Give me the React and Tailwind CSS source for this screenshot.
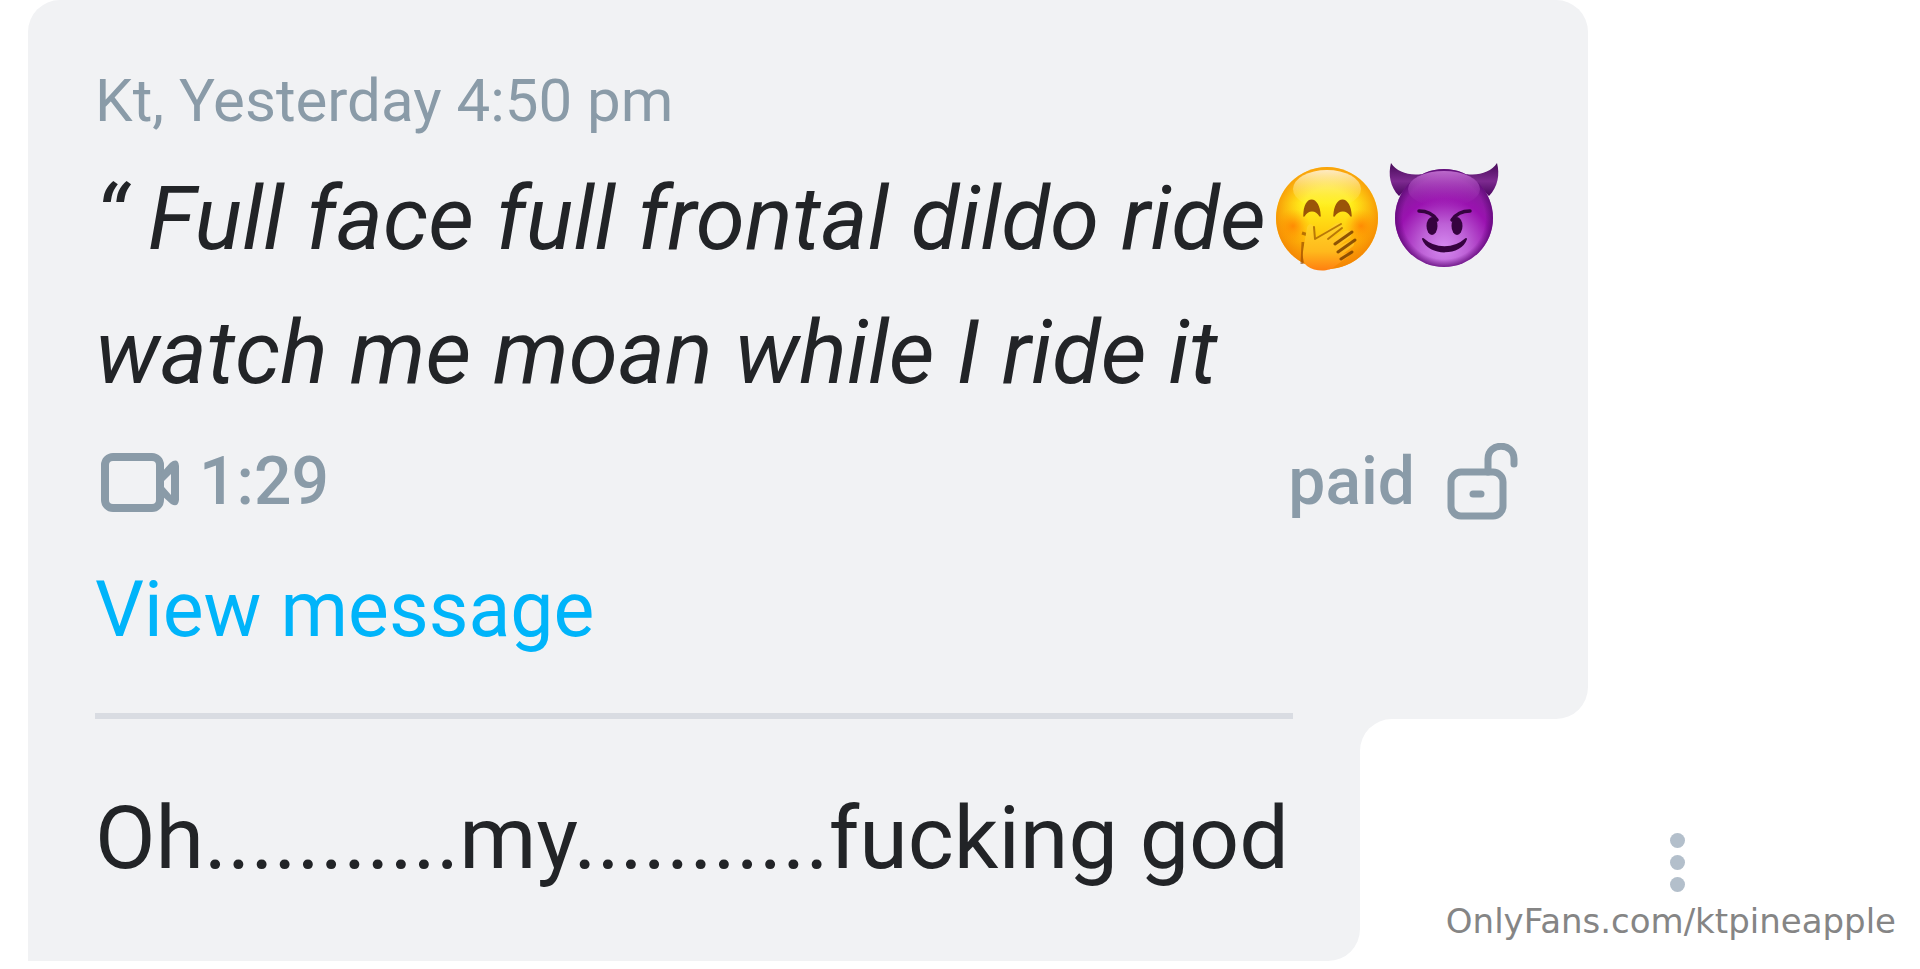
function GiggleFace() {
  return (
    <svg role="img" aria-label="Face with hand over mouth" viewBox="0 0 116 116" className="ml-1 inline-block size-[116px] align-[-27px]">
      <defs>
        <linearGradient id="faceFill" x1="0" y1="0" x2="0" y2="1">
          <stop offset="0" stopColor="#ffd21c" />
          <stop offset="0.35" stopColor="#fff01c" />
          <stop offset="0.7" stopColor="#ffc40c" />
          <stop offset="1" stopColor="#f99a0c" />
        </linearGradient>
        <radialGradient id="faceRim" cx="0.5" cy="0.46" r="0.56">
          <stop offset="0.45" stopColor="#ff9a00" stopOpacity="0" />
          <stop offset="1" stopColor="#f28204" stopOpacity="1" />
        </radialGradient>
        <radialGradient id="blush">
          <stop offset="0" stopColor="#ff7a00" stopOpacity="0.75" />
          <stop offset="1" stopColor="#ff9000" stopOpacity="0" />
        </radialGradient>
        <linearGradient id="shine" x1="0" y1="0" x2="0" y2="1">
          <stop offset="0" stopColor="#fff" stopOpacity="0.75" />
          <stop offset="1" stopColor="#fff36a" stopOpacity="0" />
        </linearGradient>
        <linearGradient id="handFill" x1="0" y1="0" x2="0" y2="1">
          <stop offset="0" stopColor="#ffd528" />
          <stop offset="0.6" stopColor="#ffb91c" />
          <stop offset="1" stopColor="#ff7f10" />
        </linearGradient>
      </defs>
      <circle cx="57" cy="58" r="51" fill="url(#faceFill)" />
      <circle cx="57" cy="58" r="51" fill="url(#faceRim)" />
      <ellipse cx="57" cy="29" rx="34" ry="19" fill="url(#shine)" />
      <circle cx="23" cy="66" r="17" fill="url(#blush)" />
      <circle cx="91" cy="66" r="17" fill="url(#blush)" />
      <path d="M34 56C34 35 49 35 50 56C46 49 38 49 34 56ZM64 56C65 35 80 35 81 56C77 49 69 49 64 56Z" fill="#9a5508" stroke="#9a5508" strokeWidth="1.5" strokeLinejoin="round" />
      <path d="M32 73l6 2M33 82l-1 22" stroke="#8a4300" strokeWidth="3" opacity="0.6" />
      <path d="M37 68C38 63 43 63 44 68L46 79L65 64C70 61 75 65 71 69L61 79L75 71C80 69 84 73 80 77L69 86L80 81C84 80 86 84 82 87L73 94L77 93C81 94 79 97 75 99L65 106C60 112 45 112 37 106C31 101 33 91 34 85Z" fill="url(#handFill)" />
      <path d="M44 67L45 79L71 64M58 79L72 68" fill="none" stroke="#a86400" strokeWidth="2" strokeLinecap="round" strokeLinejoin="round" opacity="0.8" />
      <path d="M65 84L82 72M68 92L85 80M71 99L82 92" fill="none" stroke="#7a3f00" strokeWidth="3" strokeLinecap="round" opacity="0.85" />
    </svg>
  );
}

function DevilFace() {
  return (
    <svg role="img" aria-label="Smiling face with horns" viewBox="0 0 116 116" className="inline-block size-[116px] align-[-27px]">
      <defs>
        <radialGradient id="devilFill" cx="0.5" cy="0.8" r="0.8">
          <stop offset="0" stopColor="#d58af0" />
          <stop offset="0.3" stopColor="#bd60d6" />
          <stop offset="0.62" stopColor="#9a12b0" />
          <stop offset="1" stopColor="#7a2590" />
        </radialGradient>
        <radialGradient id="devilRim">
          <stop offset="0.84" stopColor="#5c0875" stopOpacity="0" />
          <stop offset="1" stopColor="#5c0875" stopOpacity="0.75" />
        </radialGradient>
        <linearGradient id="devilShine" x1="0" y1="0" x2="0" y2="1">
          <stop offset="0" stopColor="#ca79d8" stopOpacity="0.85" />
          <stop offset="1" stopColor="#a32bb9" stopOpacity="0" />
        </linearGradient>
        <linearGradient id="horn" x1="0" y1="0" x2="0" y2="1">
          <stop offset="0" stopColor="#470b58" />
          <stop offset="0.55" stopColor="#7d2a90" />
          <stop offset="1" stopColor="#4b0660" />
        </linearGradient>
      </defs>
      <path d="M5 3C2 14 4 27 13 36L36 14C23 16 11 12 5 3ZM111 3C114 14 112 27 103 36L80 14C93 16 105 12 111 3Z" fill="url(#horn)" />
      <circle cx="58" cy="58" r="49" fill="url(#devilFill)" />
      <circle cx="58" cy="58" r="49" fill="url(#devilRim)" />
      <ellipse cx="58" cy="29" rx="36" ry="18" fill="url(#devilShine)" />
      <path d="M33 51C41 51 47 54 51 60M84 51C76 51 70 54 66 60" fill="none" stroke="#35033f" strokeWidth="3.5" strokeLinecap="round" />
      <ellipse cx="46" cy="66" rx="5.5" ry="9" fill="#35033f" />
      <ellipse cx="71" cy="66" rx="5.5" ry="9" fill="#35033f" />
      <path d="M37 79C49 90 68 90 80 79C75 95 43 96 37 79Z" fill="#35033f" stroke="#35033f" strokeWidth="2" strokeLinejoin="round" />
    </svg>
  );
}

function VideoIcon() {
  return (
    <svg aria-hidden="true" viewBox="0 0 80 60" className="h-[60px] w-[80px]" fill="none" stroke="currentColor">
      <rect x="4" y="5" width="55" height="51" rx="8" strokeWidth="8" />
      <path d="M60 21L69 11Q77 5 78 14V48Q77 56 70 52L60 43Z" fill="currentColor" stroke="none" />
      <path d="M63 29L70 22V43L63 35Z" fill="#f1f2f4" stroke="none" />
    </svg>
  );
}

function UnlockIcon() {
  return (
    <svg aria-hidden="true" viewBox="0 0 72 78" className="h-[78px] w-[72px]" fill="none" stroke="currentColor" strokeWidth="7" strokeLinecap="round">
      <rect x="4" y="29" width="52" height="44" rx="10" />
      <path d="M41 29V16C41 -1 67 -1 67 16V21" />
      <path d="M26 51H34" />
    </svg>
  );
}

export default function App() {
  return (
    <main className="relative min-h-screen overflow-hidden bg-white pl-7 font-[Roboto,sans-serif] text-[#222427]">
      <section className="w-full max-w-[1560px] rounded-t-[32px] rounded-br-[32px] bg-[#f1f2f4] pt-16 pr-[69px] pb-[59px] pl-[67px]">
        <p className="text-[60px] leading-[74px] text-[#8a9ba8]">Kt, Yesterday 4:50 pm</p>
        <blockquote className="mt-[14px] text-[89px] leading-[134px] whitespace-nowrap italic">
          “ Full face full frontal dildo ride<GiggleFace /><DevilFace />
          <br />
          watch me moan while I ride it
        </blockquote>
        <div className="mt-3 flex h-[100px] items-center justify-between text-[66px] leading-[100px] font-medium text-[#8a9ba8]">
          <span className="flex items-center gap-[18px] pl-[6px]"><VideoIcon />1:29</span>
          <span className="flex items-center gap-8">paid<UnlockIcon /></span>
        </div>
        <a href="#message" className="mt-7 block w-fit text-[77px] leading-[100px] text-[#00b4fa]">View message</a>
      </section>
      <div className="-mt-[6px] flex h-[248px]">
        <section id="message" className="rounded-br-[32px] bg-[#f1f2f4] px-[67px]">
          <p className="border-t-[6px] border-[#d9dce2] pt-[59px] pr-1 text-[88px] leading-[120px] whitespace-nowrap">Oh...........my...........fucking god</p>
        </section>
        <div className="mt-[6px] size-8 bg-[#f1f2f4]"><div className="size-8 rounded-tl-[32px] bg-white" /></div>
        <button type="button" aria-label="More options" className="mt-[114px] mr-[228px] ml-auto flex h-[70px] w-[30px] flex-col items-center justify-center gap-[7px] text-[#b3bfcb]">
          <span className="size-[15px] rounded-full bg-current" />
          <span className="size-[15px] rounded-full bg-current" />
          <span className="size-[15px] rounded-full bg-current" />
        </button>
      </div>
      <div className="absolute right-6 bottom-7 font-['DejaVu_Sans',sans-serif] text-[34px] leading-[40px] text-[#858585]">OnlyFans.com/ktpineapple</div>
    </main>
  );
}
